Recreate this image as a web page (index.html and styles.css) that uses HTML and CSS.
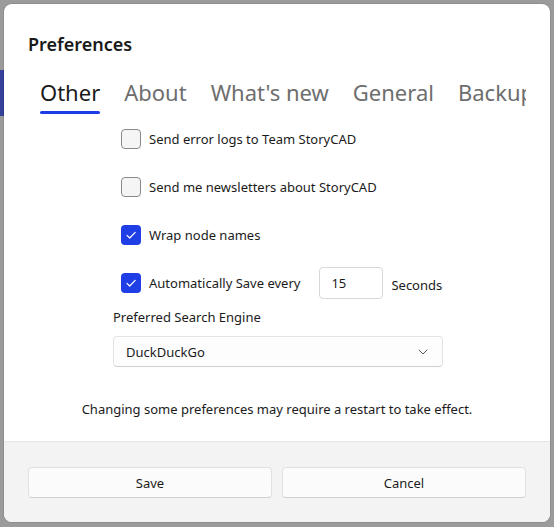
FILE: index.html
```html
<!DOCTYPE html>
<html>
<head>
<meta charset="utf-8">
<link rel="stylesheet" href="styles.css">
</head>
<body>
<div class="backdrop">
  <div class="bg-bar"></div>
  <div class="dialog">
    <div class="content">
      <h1 class="title">Preferences</h1>
      <div class="tabs">
        <div class="tab active">Other</div>
        <div class="tab">About</div>
        <div class="tab">What's new</div>
        <div class="tab">General</div>
        <div class="tab">Backup</div>
      </div>
      <div class="panel">
        <label class="check-row">
          <span class="box"></span>
          <span>Send error logs to Team StoryCAD</span>
        </label>
        <label class="check-row">
          <span class="box"></span>
          <span>Send me newsletters about StoryCAD</span>
        </label>
        <label class="check-row">
          <span class="box checked"><svg viewBox="0 0 20 20" width="20" height="20"><path d="M6 10.3 L8.7 13 L14.2 7.4" fill="none" stroke="#fff" stroke-width="1.2" stroke-linecap="round" stroke-linejoin="round"/></svg></span>
          <span>Wrap node names</span>
        </label>
        <div class="check-row autosave">
          <span class="box checked"><svg viewBox="0 0 20 20" width="20" height="20"><path d="M6 10.3 L8.7 13 L14.2 7.4" fill="none" stroke="#fff" stroke-width="1.2" stroke-linecap="round" stroke-linejoin="round"/></svg></span>
          <span class="autosave-label">Automatically Save every</span>
          <span class="numbox">15</span>
          <span class="seconds">Seconds</span>
        </div>
        <div class="field-label">Preferred Search Engine</div>
        <div class="combo">
          <span>DuckDuckGo</span>
          <svg class="chev" viewBox="0 0 10 6" width="10" height="6"><path d="M1 1 L5 5 L9 1" fill="none" stroke="#555" stroke-width="1" stroke-linecap="round" stroke-linejoin="round"/></svg>
        </div>
      </div>
      <p class="note">Changing some preferences may require a restart to take effect.</p>
    </div>
    <div class="footer">
      <button class="btn">Save</button>
      <button class="btn">Cancel</button>
    </div>
  </div>
</div>
</body>
</html>
```

FILE: styles.css
```css
* { box-sizing: border-box; }
html, body {
  margin: 0;
  padding: 0;
  width: 554px;
  height: 527px;
  overflow: hidden;
  background: #9b9b9b;
  font-family: "Noto Sans", "Open Sans", sans-serif;
  color: #1b1b1b;
}
.backdrop {
  position: relative;
  width: 554px;
  height: 527px;
  padding: 4px 4px 5px 4px;
}
.bg-bar {
  position: absolute;
  left: 0;
  top: 70px;
  width: 4px;
  height: 46px;
  background: #34409a;
}
.dialog {
  position: relative;
  width: 546px;
  height: 518px;
  background: #ffffff;
  border-radius: 8px;
  overflow: hidden;
  display: flex;
  flex-direction: column;
  box-shadow: 0 0 0 1px rgba(0,0,0,0.08);
}
.content {
  flex: 1;
  padding: 28px 24px 0 24px;
  display: flex;
  flex-direction: column;
}
.title {
  margin: 0;
  font-size: 18px;
  font-weight: 600;
  line-height: 24px;
  color: #1a1a1a;
}
.tabs {
  margin-top: 21px;
  padding-left: 12px;
  display: flex;
  gap: 24px;
  overflow: hidden;
  white-space: nowrap;
  height: 44px;
}
.tab {
  position: relative;
  font-size: 22px;
  line-height: 30px;
  color: #6e6e6e;
  flex: none;
}
.tab.active {
  color: #1a1a1a;
}
.tab.active::after {
  content: "";
  position: absolute;
  left: 0;
  right: 0;
  top: 34px;
  height: 3px;
  border-radius: 2px;
  background: #1c3ce8;
}
.panel {
  margin-left: 85px;
  width: 330px;
  display: flex;
  flex-direction: column;
  margin-top: 8px;
}
.check-row {
  display: flex;
  align-items: center;
  height: 20px;
  margin-left: 8px;
  margin-top: 28px;
  font-size: 13px;
  white-space: nowrap;
  color: #1b1b1b;
}
.check-row:first-child { margin-top: 0; }
.box {
  width: 20px;
  height: 20px;
  border-radius: 4px;
  border: 1px solid #8a8a8a;
  background: #f5f5f5;
  margin-right: 8px;
  flex: none;
  display: block;
}
.box.checked {
  border: none;
  background: #1f3ee6;
}
.box svg { display: block; }
.numbox {
  margin-left: 19px;
  width: 64px;
  height: 32px;
  flex: none;
  border: 1px solid #d8d8d8;
  border-radius: 4px;
  background: #fff;
  padding-left: 11px;
  display: flex;
  align-items: center;
  font-size: 13px;
}
.seconds {
  margin-left: 8px;
  padding-top: 3px;
}
.field-label {
  margin-top: 14px;
  font-size: 13px;
  line-height: 20px;
  color: #1b1b1b;
}
.combo {
  margin-top: 9px;
  height: 31px;
  border: 1px solid #e3e3e3;
  border-bottom-color: #cfcfcf;
  border-radius: 4px;
  background: #fdfdfd;
  display: flex;
  align-items: center;
  justify-content: space-between;
  padding: 0 14px 0 12px;
  font-size: 13px;
}
.chev { display: block; }
.note {
  margin: 32px 0 0 0;
  text-align: center;
  font-size: 13px;
  line-height: 20px;
  color: #1b1b1b;
}
.footer {
  height: 81px;
  flex: none;
  background: #f3f3f3;
  border-top: 1px solid #e5e5e5;
  display: flex;
  gap: 10px;
  padding: 25px 24px 0 24px;
}
.btn {
  flex: 1;
  height: 31px;
  border: 1px solid #e0e0e0;
  border-bottom-color: #d0d0d0;
  border-radius: 4px;
  background: #fbfbfb;
  font-family: inherit;
  font-size: 13px;
  color: #1b1b1b;
}
```
